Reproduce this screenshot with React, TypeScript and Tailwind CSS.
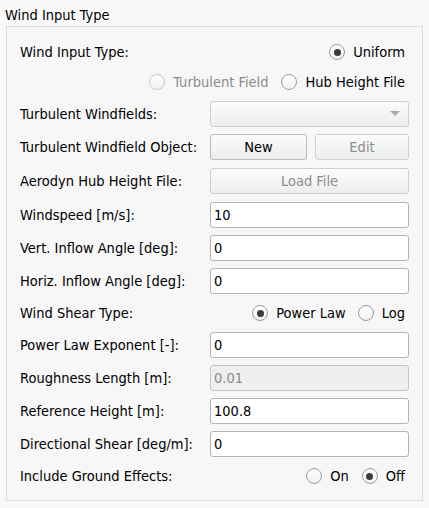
import React from "react";

const font = { fontFamily: '"DejaVu Sans Condensed", "DejaVu Sans", sans-serif' };

function Radio({ checked, disabled }: { checked?: boolean; disabled?: boolean }) {
  return (
    <span
      className={
        "relative inline-flex h-[16px] w-[16px] items-center justify-center rounded-full border bg-gradient-to-b from-white to-[#f2f2f2] " +
        (disabled ? "border-[#c8c8c8]" : "border-[#9c9c9c]")
      }
    >
      {checked && <span className="h-[7px] w-[7px] rounded-full bg-[#3a3a3a]" />}
    </span>
  );
}

function RadioItem({ label, checked, disabled }: { label: string; checked?: boolean; disabled?: boolean }) {
  return (
    <span className="flex items-center gap-[8px]">
      <Radio checked={checked} disabled={disabled} />
      <span className={disabled ? "text-[#8c8c8c]" : "text-black"}>{label}</span>
    </span>
  );
}

function Row({ label, children, className = "" }: { label?: string; children?: React.ReactNode; className?: string }) {
  return (
    <div className={"flex h-[26px] items-center " + className}>
      <div className="w-[190px] shrink-0 text-black">{label}</div>
      <div className="flex flex-1 items-center">{children}</div>
    </div>
  );
}

function Input({ value, disabled }: { value: string; disabled?: boolean }) {
  return (
    <div
      className={
        "flex h-[26px] w-full items-center rounded-[3px] border px-[3px] pt-[1px] " +
        (disabled ? "border-[#c4c4c4] bg-[#efefef] text-[#8a8a8a]" : "border-[#b4b4b4] bg-white text-black")
      }
    >
      {value}
    </div>
  );
}

function Button({ label, disabled, className = "" }: { label: string; disabled?: boolean; className?: string }) {
  return (
    <div
      className={
        "flex h-[26px] items-center justify-center rounded-[3px] border bg-gradient-to-b from-[#fcfcfc] to-[#ededed] pt-[1px] " +
        (disabled ? "border-[#cfcfcf] text-[#8c8c8c] " : "border-[#b9b9b9] text-black ") +
        className
      }
    >
      {label}
    </div>
  );
}

export default function App() {
  return (
    <div className="h-[508px] w-[429px] bg-[#f9f9f9] text-[14.5px] leading-none" style={font}>
      <div className="flex h-[26px] items-center pl-[5px] pt-[4px] text-black">Wind Input Type</div>
      <div className="ml-[6px] mr-[6px] h-[475px] border border-[#dcdcdc] bg-[#f7f7f7] pl-[13px] pr-[13px] pt-[12px]">
        <Row label="Wind Input Type:">
          <div className="flex w-full justify-end pr-[4px]">
            <RadioItem label="Uniform" checked />
          </div>
        </Row>
        <div className="mt-[4px] flex h-[26px] items-center justify-end gap-[13px] pr-[4px]">
          <RadioItem label="Turbulent Field" disabled />
          <RadioItem label="Hub Height File" />
        </div>
        <Row label="Turbulent Windfields:" className="mt-[6px]">
          <div className="flex h-[26px] w-full items-center justify-end rounded-[3px] border border-[#cfcfcf] bg-gradient-to-b from-[#fcfcfc] to-[#ededed] pr-[8px]">
            <svg width="10" height="6" viewBox="0 0 10 6">
              <path d="M0 0 L10 0 L5 5 Z" fill="#a8a8a8" />
            </svg>
          </div>
        </Row>
        <Row label="Turbulent Windfield Object:" className="mt-[7px]">
          <div className="flex w-full gap-[8px]">
            <Button label="New" className="w-[97px]" />
            <Button label="Edit" disabled className="flex-1" />
          </div>
        </Row>
        <Row label="Aerodyn Hub Height File:" className="mt-[8px]">
          <Button label="Load File" disabled className="w-full" />
        </Row>
        <Row label="Windspeed [m/s]:" className="mt-[8px]">
          <Input value="10" />
        </Row>
        <Row label="Vert. Inflow Angle [deg]:" className="mt-[7px]">
          <Input value="0" />
        </Row>
        <Row label="Horiz. Inflow Angle [deg]:" className="mt-[7px]">
          <Input value="0" />
        </Row>
        <Row label="Wind Shear Type:" className="mt-[6px]">
          <div className="flex w-full justify-end gap-[12px] pr-[4px]">
            <RadioItem label="Power Law" checked />
            <RadioItem label="Log" />
          </div>
        </Row>
        <Row label="Power Law Exponent [-]:" className="mt-[6px]">
          <Input value="0" />
        </Row>
        <Row label="Roughness Length [m]:" className="mt-[7px]">
          <Input value="0.01" disabled />
        </Row>
        <Row label="Reference Height [m]:" className="mt-[7px]">
          <Input value="100.8" />
        </Row>
        <Row label="Directional Shear [deg/m]:" className="mt-[7px]">
          <Input value="0" />
        </Row>
        <Row label="Include Ground Effects:" className="mt-[6px]">
          <div className="flex w-full justify-end gap-[13px] pr-[4px]">
            <RadioItem label="On" />
            <RadioItem label="Off" checked />
          </div>
        </Row>
      </div>
    </div>
  );
}
